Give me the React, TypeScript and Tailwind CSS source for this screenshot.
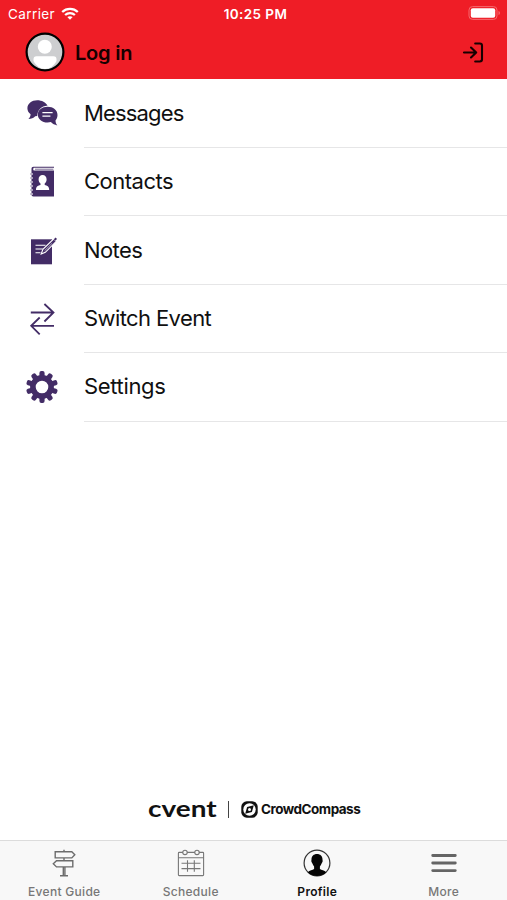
import type { ReactNode } from "react";

const PURPLE = "#432c66";

function MessagesIcon() {
  return (
    <svg viewBox="0 0 32 32" className="size-8" fill={PURPLE}>
      <path d="M11.200 2.300C5.800 2.300 1.400 5.700 1.400 10.300c0 2.500 1.300 4.600 3.200 6-.1 2.200-.9 3.600-2.200 4.800 2.900-.1 5.200-1 6.800-2.800l2-.2c.3-5.700 4-9.900 10.400-10.500C19.800 4.500 15.900 2.300 11.200 2.300z" />
      <path d="M21.600 8.700c-5.500 0-9.800 3.300-9.800 7.800s4.300 8.100 9.800 8.100c1.200 0 2.300-.2 3.300-.5 1.700 1.800 3.700 2.900 6.400 3.300-1.200-1.500-1.700-3-1.800-5 1.300-1.400 2-3.300 2-5.500 0-4.900-4.400-8.200-9.900-8.200z" />
      <path d="M16.400 14.700h10.200M16.400 18.100h8" stroke="white" strokeWidth="1.200" />
    </svg>
  );
}

function ContactsIcon() {
  return (
    <svg viewBox="0 0 32 32" className="size-8" fill={PURPLE}>
      <path d="M7.500.7H28v1.100H8.200c-1.300 0-1.300 2.800 0 2.800H28v26H7.500c-1.300 0-2-.8-2-2V3C5.500 1.500 6.200.7 7.500.7z" />
      <path d="M9 3.200h18.400" stroke={PURPLE} strokeWidth=".7" />
      <path d="M4.300 8h2.500M4.300 12h2.500M4.300 16h2.500M4.300 20h2.500M4.300 24h2.500M4.300 28h2.500" stroke="white" strokeWidth="1.800" />
      <path d="M4.300 8h2.500M4.300 12h2.500M4.300 16h2.500M4.300 20h2.500M4.300 24h2.500M4.300 28h2.500" stroke={PURPLE} strokeWidth=".8" />
      <path fill="white" d="M16.600 9c-2.400 0-4 1.700-4 4.200 0 2 .7 3.500 1.900 4.300V19c-2.500.8-4.500 1.200-4.500 4.900h13.200c0-3.700-2-4.100-4.500-4.900v-1.500c1.200-.8 1.900-2.300 1.900-4.300 0-2.500-1.600-4.200-4-4.200z" />
    </svg>
  );
}

function NotesIcon() {
  return (
    <svg viewBox="0 0 32 32" className="size-8" fill={PURPLE}>
      <path d="M5 4.300h21v25H5z" />
      <path d="M9.500 10.200h10M9.500 14h7.300M9.500 17.800h5" stroke="white" strokeWidth="1.100" />
      <path d="M15.200 19l1.700-4.700L27.800 3.800l2.500 2.500-11 11z" stroke="white" strokeWidth="1.100" />
      <path d="M28.500 5l1.800-1.800" stroke={PURPLE} strokeWidth="2" />
      <path d="M18.600 15.700l7.500-7.400" stroke="white" strokeWidth=".6" />
    </svg>
  );
}

function SwitchIcon() {
  return (
    <svg viewBox="0 0 32 32" className="size-8 overflow-visible" fill="none" stroke={PURPLE} strokeWidth="1.800">
      <path d="M4.800 9.500h22.500M18.400 1L27.500 9.500l-9.100 9M28 22.800H5.500M13.700 14.500l-8.500 8.300 8.500 8.500" />
    </svg>
  );
}

const TEETH = [0, 36, 72, 108, 144, 180, 216, 252, 288, 324];

function SettingsIcon() {
  return (
    <svg viewBox="0 0 32 32" className="size-8" fill={PURPLE}>
      {TEETH.map((a) => (
        <rect key={a} x="13.400" y="0" width="5.200" height="7" rx="2" transform={`rotate(${a} 16 16)`} />
      ))}
      <circle cx="16" cy="16" r="9.100" fill="none" stroke={PURPLE} strokeWidth="5.600" />
    </svg>
  );
}

function StatusBar() {
  return (
    <div className="grid h-[28px] grid-cols-3 items-center pl-[8px] pr-[6px] text-white">
      <div className="flex items-center gap-[6px]">
        <span className="text-[13.500px] tracking-[0.400px]">Carrier</span>
        <svg viewBox="0 0 18 13" className="mb-px h-[13px] w-[18px]" fill="none" stroke="white" strokeWidth="2.300">
          <path d="M1.200 5C5.600.8 12.400.8 16.800 5M4.100 8c2.800-2.600 7-2.600 9.800 0" />
          <path d="M6.300 10.100c1.600-1.300 3.800-1.300 5.400 0L9 12.700z" fill="white" stroke="none" />
        </svg>
      </div>
      <span className="whitespace-nowrap pl-[2px] text-center text-[13.500px] font-semibold tracking-[0.400px]">10:25 PM</span>
      <svg viewBox="0 0 33 14" className="mb-[2px] h-[14px] w-[33px] justify-self-end">
        <rect x="1" y=".6" width="28" height="12.800" rx="3.500" fill="none" stroke="#f6696e" />
        <rect x="2.800" y="2.300" width="24.400" height="9.400" rx="2" fill="white" />
        <path d="M30.500 5c1.900.5 1.900 3.500 0 4z" fill="#f6696e" />
      </svg>
    </div>
  );
}

function Header() {
  return (
    <header className="h-[79px] bg-[#ef1d26]">
      <StatusBar />
      <div className="flex h-[49px] items-center pl-[25px] pr-[23px]">
        <svg viewBox="0 0 40 40" className="mb-px size-10">
          <circle cx="20" cy="20" r="18.400" fill="#cdced0" stroke="black" strokeWidth="2.200" />
          <circle cx="19.800" cy="14.700" r="7" fill="white" />
          <path d="M8.500 29v-1.500c0-2.200 1-3.200 3-3.200h17c2 0 3 1 3 3.200V29c-2.500 4.600-6.500 8-11.500 8s-9-3.400-11.500-8z" fill="white" />
        </svg>
        <span className="ml-[10px] text-[20px] leading-6 font-semibold tracking-[-0.200px] text-[#160000]">Log in</span>
        <svg viewBox="0 0 22 22" className="ml-auto size-[22px]" fill="none" stroke="#160000" strokeWidth="2.100" strokeLinecap="round" strokeLinejoin="round">
          <path d="M2 10.500h12M9 5.500l5.200 5-5.200 5M13.200 1.500h4.600c1.500 0 2.200.8 2.200 2.200v13.600c0 1.400-.7 2.200-2.200 2.200h-4.600" />
        </svg>
      </div>
    </header>
  );
}

function Row({ icon, label }: { icon: ReactNode; label: ReactNode }) {
  return (
    <li className="flex h-[68.400px] items-center pl-[26px]">
      <span className="w-[58px] shrink-0">{icon}</span>
      <span className="flex h-full grow items-center border-b border-[#e6e6e7] text-[22px] text-[#101010]">{label}</span>
    </li>
  );
}

function Brand() {
  return (
    <div className="flex h-[22px] items-center pl-[148px] text-[#111]">
      <span className="w-[68px] shrink-0">
        <span className="block w-max origin-left scale-x-[1.270] font-['Lato'] text-[22px] leading-[22px] font-bold">cvent</span>
      </span>
      <span className="ml-[12px] h-[17px] w-px bg-[#444]" />
      <svg viewBox="0 0 17 17" className="ml-[12px] size-[17px] shrink-0">
        <rect x=".3" y=".3" width="16.400" height="16.400" rx="5.500" fill="#111" />
        <circle cx="8.500" cy="8.500" r="6.200" fill="white" />
        <path d="M12.800 4.200L10.900 10.900l-6.700 1.900L6.100 6.100z" fill="#111" />
        <circle cx="8.500" cy="8.500" r="1.500" fill="white" />
      </svg>
      <span className="ml-[3px] text-[13.500px] font-bold tracking-[-0.500px]">CrowdCompass</span>
    </div>
  );
}

function GuideIcon() {
  return (
    <svg viewBox="0 0 28 28" className="size-7" fill="none" stroke="#6c6c6c" strokeWidth="1.400">
      <path d="M14 .8v2M14 9v2.500M13.300 18v8M14.900 18v8M10 26.700h8" />
      <path d="M5.200 2.700h16.600l3 3.100-3 3.100H5.200zM22.800 11.700H6.500l-3.200 3.100 3.200 3.100h16.300z" />
    </svg>
  );
}

function ScheduleIcon() {
  return (
    <svg viewBox="0 0 28 28" className="size-7" fill="none" stroke="#777" strokeWidth="1.100">
      <path d="M6 3.400H2.200c-.5 0-.8.300-.8.800v21.600c0 .5.300.8.800.8h23.600c.5 0 .8-.3.800-.8V4.200c0-.5-.3-.8-.8-.8H22M10 3.400h8M1.400 8.700h25.200" />
      <circle cx="8" cy="3.400" r="2.200" />
      <circle cx="20" cy="3.400" r="2.200" />
      <path d="M4.500 14.300h19M4.500 19.600h19M10.500 11.300v11.400M17.300 11.300v11.400" />
    </svg>
  );
}

function ProfileIcon() {
  return (
    <svg viewBox="0 0 28 28" className="size-7">
      <circle cx="14" cy="14" r="12.900" fill="none" stroke="#333" strokeWidth="1.200" />
      <path fill="#050505" d="M14 5c-3.300 0-5.500 2.100-5.500 5.600 0 .8-.3 1-.1 2 .2.900.7 1.200 1 2 .4 1.200.9 2 1.700 2.800V20c-1.500 1-4.500 1.300-6.400 3.200C7 25.700 10.300 27 14 27s7-1.300 9.300-3.800c-1.900-1.900-4.900-2.200-6.400-3.200v-2.600c.8-.8 1.300-1.600 1.700-2.800.3-.8.8-1.100 1-2 .2-1-.1-1.200-.1-2C19.500 7.100 17.300 5 14 5z" />
    </svg>
  );
}

function MoreIcon() {
  return (
    <svg viewBox="0 0 28 28" className="size-7" stroke="#656565" strokeWidth="2.800" strokeLinecap="round">
      <path d="M2.700 6.500h22.600M2.700 14h22.600M2.700 21.600h22.600" />
    </svg>
  );
}

function Tab({ icon, label, active }: { icon: ReactNode; label: string; active?: boolean }) {
  return (
    <div className={active ? "flex flex-col items-center text-[#111] font-semibold" : "flex flex-col items-center text-[#777] font-medium"}>
      {icon}
      <span className="mt-[7px] whitespace-nowrap text-[12px] leading-[15px] tracking-[0.300px]">{label}</span>
    </div>
  );
}

export default function App() {
  return (
    <div className="flex h-[900px] w-[507px] flex-col overflow-hidden bg-white font-['Inter','Liberation_Sans',sans-serif]">
      <Header />
      <ul className="pt-[0.600px]">
        <Row icon={<MessagesIcon />} label={<span className="tracking-[-0.850px]">Messages</span>} />
        <Row icon={<ContactsIcon />} label={<span className="tracking-[-0.500px]">Contacts</span>} />
        <Row icon={<NotesIcon />} label={<span className="tracking-[-0.600px]">Notes</span>} />
        <Row icon={<SwitchIcon />} label={<span className="tracking-[-0.600px]">Switch Event</span>} />
        <Row icon={<SettingsIcon />} label={<span className="tracking-[-0.350px]">Settings</span>} />
      </ul>
      <div className="mt-auto mb-[20px]">
        <Brand />
      </div>
      <nav className="grid h-[60px] shrink-0 grid-cols-4 border-t border-[#dcdcdc] bg-[#f8f8f8] pt-[8px] pl-px">
        <Tab icon={<GuideIcon />} label="Event Guide" />
        <Tab icon={<ScheduleIcon />} label="Schedule" />
        <Tab icon={<ProfileIcon />} label="Profile" active />
        <Tab icon={<MoreIcon />} label="More" />
      </nav>
    </div>
  );
}
